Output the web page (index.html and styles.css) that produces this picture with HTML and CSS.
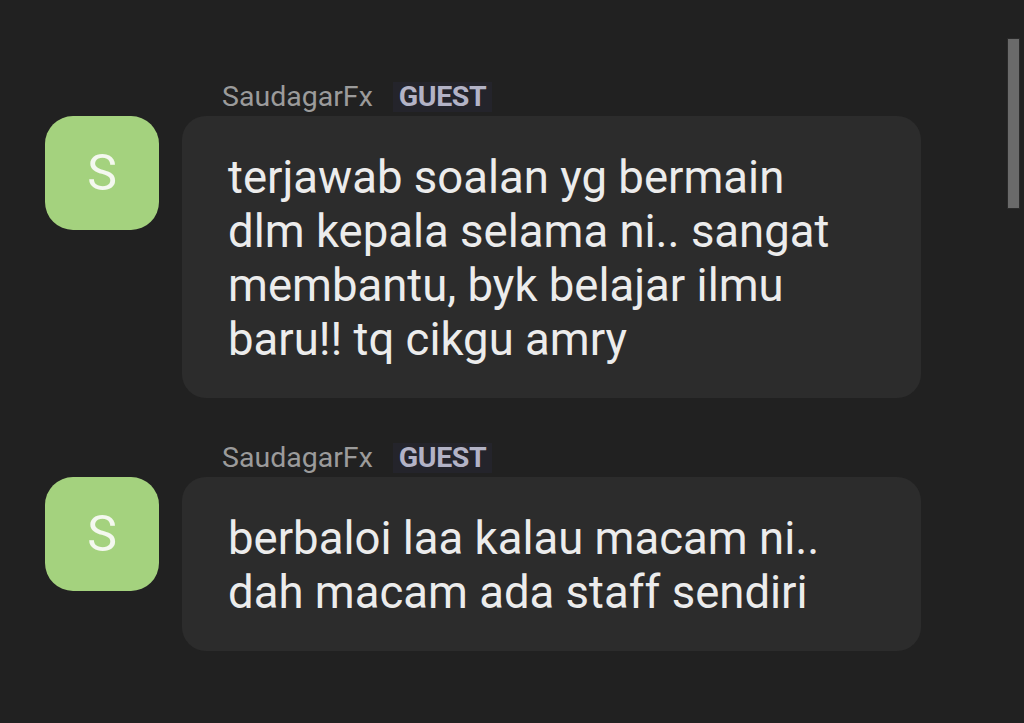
FILE: index.html
```html
<!DOCTYPE html>
<html>
    <head>
        <meta name="viewport" content="width=device-width, initial-scale=1.0">
        <title>Comments</title>
        <link rel="stylesheet" href="styles.css">
    </head>
    <body>
        <div class="chat">
            <div class="message">
                <div class="avatar">S</div>
                <div class="content">
                    <div class="meta">
                        <span class="name">SaudagarFx</span>
                        <span class="badge">GUEST</span>
                    </div>
                    <div class="bubble">terjawab soalan yg bermain dlm kepala selama ni.. sangat membantu, byk belajar ilmu baru!! tq cikgu amry</div>
                </div>
            </div>

            <div class="message">
                <div class="avatar">S</div>
                <div class="content">
                    <div class="meta">
                        <span class="name">SaudagarFx</span>
                        <span class="badge">GUEST</span>
                    </div>
                    <div class="bubble">berbaloi laa kalau macam ni.. dah macam ada staff sendiri</div>
                </div>
            </div>
        </div>
        <div class="scrollbar"></div>
    </body>
</html>
```
FILE: styles.css
```css
html, body {
    margin: 0;
    height: 100%;
    background: #212121;
    overflow: hidden;
}
body {
    font-family: Roboto, "Noto Sans", sans-serif;
    color: #ececec;
}
.chat {
    display: flex;
    flex-direction: column;
    gap: 45px;
    padding: 82px 0 0 45px;
}
.message {
    display: grid;
    grid-template-columns: 114px 739px;
    column-gap: 23px;
}
.avatar {
    margin-top: 34px;
    width: 114px;
    height: 114px;
    border-radius: 28px;
    background: #a4d27e;
    color: #f4f8ef;
    font-size: 50px;
    display: flex;
    align-items: center;
    justify-content: center;
}
.meta {
    display: flex;
    align-items: center;
    gap: 20px;
    height: 30px;
    margin-bottom: 4px;
    padding-left: 40px;
    font-size: 28.5px;
    line-height: 30px;
}
.name {
    color: #9b9b9b;
}
.badge {
    color: #b3b3c6;
    font-weight: bold;
    letter-spacing: -0.4px;
    background: #24242b;
    padding: 0 6px;
}
.bubble {
    background: #2c2c2c;
    border-radius: 24px;
    padding: 35px 76px 31px 46px;
    font-size: 45.5px;
    line-height: 54px;
}
.scrollbar {
    position: absolute;
    top: 38px;
    left: 1007px;
    width: 11px;
    height: 169px;
    background: #6a6a6a;
    border: 1px solid #2a2a2a;
}
```
